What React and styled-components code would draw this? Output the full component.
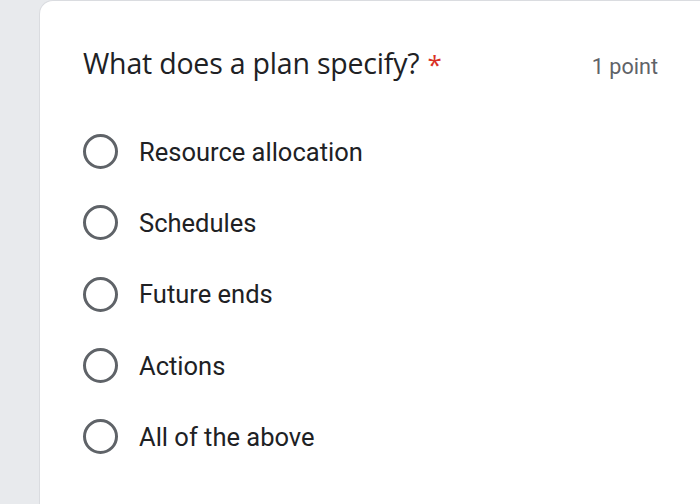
import React from "react";
import styled, { createGlobalStyle } from "styled-components";

const Global = createGlobalStyle`
  html, body { margin: 0; padding: 0; background: #e8eaed; }
  body { font-family: Roboto, "Open Sans", sans-serif; }
`;

const Page = styled.div`
  display: flex;
  width: 700px;
  height: 504px;
  overflow: hidden;
  background: #e8eaed;
`;

const Card = styled.div`
  margin-left: 39px;
  flex: 1;
  background: #ffffff;
  border-top-left-radius: 14px;
  border-left: 1px solid #dadce0;
  border-top: 1px solid #dadce0;
  padding: 42px 42px 0 43px;
  box-sizing: border-box;
`;

const Header = styled.div`
  display: flex;
  justify-content: space-between;
  align-items: baseline;
  height: 48px;
`;

const Title = styled.div`
  font-family: "Open Sans", Roboto, sans-serif;
  font-size: 28.5px;
  line-height: 40px;
  color: #202124;
  letter-spacing: -0.2px;
`;

const Star = styled.span`
  color: #d93025;
  margin-left: 8px;
  font-size: 26px;
`;

const Points = styled.div`
  font-family: Roboto, sans-serif;
  font-size: 21.6px;
  color: #5f6368;
`;

const Options = styled.div`
  display: flex;
  flex-direction: column;
  margin-top: 25px;
`;

const Option = styled.label`
  display: flex;
  align-items: center;
  height: 71.3px;
  gap: 21px;
`;

const Radio = styled.span`
  width: 35px;
  height: 35px;
  box-sizing: border-box;
  border: 3.5px solid #5f6368;
  border-radius: 50%;
  flex-shrink: 0;
`;

const Label = styled.span`
  font-family: Roboto, sans-serif;
  font-size: 25.5px;
  color: #202124;
`;

const options = ["Resource allocation", "Schedules", "Future ends", "Actions", "All of the above"];

export default function App() {
  return (
    <>
      <Global />
      <Page>
        <Card>
          <Header>
            <Title>
              What does a plan specify?<Star>*</Star>
            </Title>
            <Points>1 point</Points>
          </Header>
          <Options>
            {options.map((o) => (
              <Option key={o}>
                <Radio />
                <Label>{o}</Label>
              </Option>
            ))}
          </Options>
        </Card>
      </Page>
    </>
  );
}
